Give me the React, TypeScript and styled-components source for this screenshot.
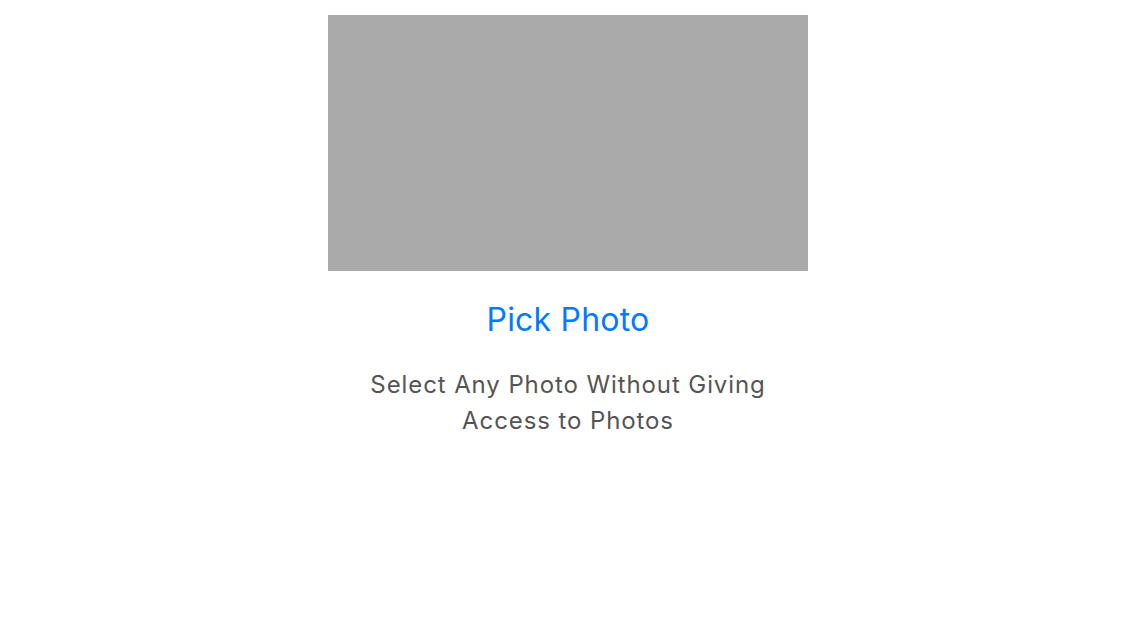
import { FC } from "react";
import styled, { createGlobalStyle } from "styled-components";

const GlobalStyle = createGlobalStyle`
    body {
        margin: 0;
        background: #ffffff;
        font-family: "Inter", "Liberation Sans", sans-serif;
    }
`;

const Page = styled.div`
    display: flex;
    flex-direction: column;
    align-items: center;
    padding-top: 15px;
    height: 625px;
`;

const Preview = styled.div`
    width: 480px;
    height: 256px;
    background-color: #aaaaaa;
`;

const PickButton = styled.button`
    margin-top: 27px;
    border: 0;
    padding: 0;
    background: none;
    color: #007aff;
    font-family: inherit;
    font-size: 32px;
    line-height: 44px;
    letter-spacing: 0.2px;
    cursor: pointer;
`;

const Hint = styled.p`
    margin: 25px 0 0;
    width: 440px;
    text-align: center;
    color: #555555;
    font-size: 24px;
    line-height: 36px;
    letter-spacing: 0.9px;
`;

const App: FC = () => {
    return (
        <>
            <GlobalStyle />
            <Page>
                <Preview />
                <PickButton>Pick Photo</PickButton>
                <Hint>Select Any Photo Without Giving Access to Photos</Hint>
            </Page>
        </>
    );
};

export default App;
